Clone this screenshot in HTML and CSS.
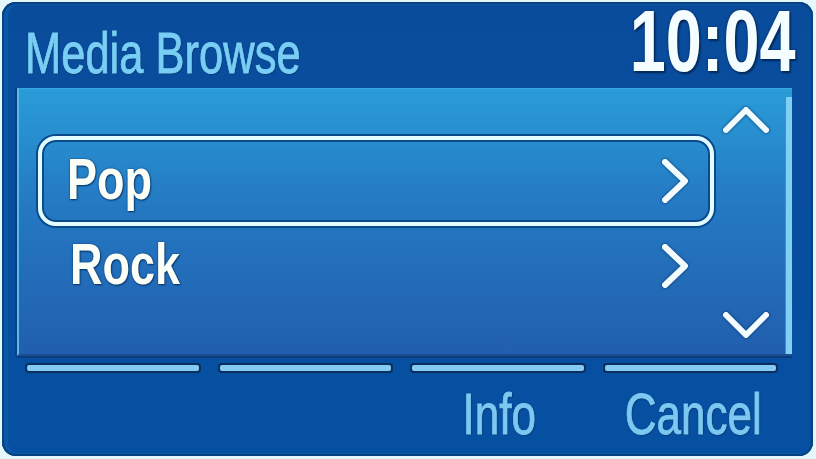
FILE: index.html
```html
<!DOCTYPE html>
<html>
<head>
<meta charset="utf-8">
<link rel="stylesheet" href="styles.css">
</head>
<body>
<div class="frame">
  <div class="header">
    <div class="title">Media Browse</div>
    <div class="clock">10:04</div>
  </div>
  <div class="panel">
    <div class="list">
      <div class="row selected">
        <span class="label">Pop</span>
        <svg class="chev" width="30" height="48" viewBox="0 0 30 48"><polyline points="5,5 25,24 5,43"/></svg>
      </div>
      <div class="row">
        <span class="label">Rock</span>
        <svg class="chev" width="30" height="48" viewBox="0 0 30 48"><polyline points="5,5 25,24 5,43"/></svg>
      </div>
    </div>
    <div class="scroll">
      <svg class="caret" width="50" height="32" viewBox="0 0 50 32"><polyline points="5,27 25,7 45,27"/></svg>
      <svg class="caret" width="50" height="32" viewBox="0 0 50 32"><polyline points="5,5 25,25 45,5"/></svg>
    </div>
    <div class="track"></div>
  </div>
  <div class="softkeys">
    <div class="bar"></div>
    <div class="bar"></div>
    <div class="bar"></div>
    <div class="bar"></div>
  </div>
  <div class="keylabels">
    <div class="key"></div>
    <div class="key"></div>
    <div class="key"><span class="keytext">Info</span></div>
    <div class="key"><span class="keytext">Cancel</span></div>
  </div>
</div>
</body>
</html>
```
FILE: styles.css
```css
html, body {
  margin: 0;
  padding: 0;
}
body {
  width: 816px;
  height: 459px;
  background: #e4f8fc;
  overflow: hidden;
  font-family: "Liberation Sans", Arial, sans-serif;
}
.frame {
  margin: 2px 3px 3px 2px;
  height: 454px;
  box-sizing: border-box;
  border-radius: 14px;
  background: linear-gradient(180deg, #0a4c9c 0%, #0650a2 100%);
  box-shadow: inset 0 0 0 2px #07417f, inset 3px 0 0 3px #0a58a8;
  display: flex;
  flex-direction: column;
  padding: 0 21px 0 15px;
}
.header {
  height: 86px;
  display: flex;
  justify-content: space-between;
  align-items: flex-end;
}
.title {
  color: #78cef4;
  font-size: 58px;
  line-height: 1;
  margin-left: 8px;
  margin-bottom: 6px;
  -webkit-text-stroke: 0.9px #78cef4;
  text-shadow: 0 0 2px #06366e, 1px 1px 1px #06366e;
  transform: scaleX(0.75);
  transform-origin: left center;
  white-space: nowrap;
}
.clock {
  color: #f4fdff;
  font-weight: bold;
  font-size: 87px;
  line-height: 80px;
  margin-right: -4px;
  margin-bottom: 7px;
  text-shadow: 0 0 3px #042a5a, 2px 2px 2px #042a5a;
  transform: scaleX(0.745);
  transform-origin: right center;
  white-space: nowrap;
}
.panel {
  height: 268px;
  box-sizing: border-box;
  background: linear-gradient(180deg, #2a9cd8 0%, #2478c2 45%, #215fae 100%);
  border-left: 2px solid #58bcea;
  border-top: 1px solid #3aa8e0;
  border-bottom: 2px solid #1a4f94;
  box-shadow: -2px 0 0 #0a3f82, 0 2px 0 #0b3c78;
  display: flex;
  position: relative;
}
.list {
  width: 676px;
  margin-left: 19px;
  padding-top: 47px;
  display: flex;
  flex-direction: column;
}
.row {
  height: 90px;
  box-sizing: border-box;
  display: flex;
  align-items: center;
  justify-content: space-between;
  padding: 0 20px 0 25px;
  border: 4px solid transparent;
  border-radius: 18px;
}
.row + .row {
  height: 88px;
  margin-top: -4px;
  padding-left: 28px;
}
.row.selected {
  border-color: #e2fcff;
  box-shadow: 0 0 0 2px #0b4a8a, inset 0 0 0 2px #0b4a8a;
}
.label {
  color: #fbfff8;
  font-weight: bold;
  font-size: 57px;
  line-height: 1;
  margin-top: -4px;
  text-shadow: 0 0 2px #063468, 1px 1px 2px #063468;
  transform: scaleX(0.79);
  transform-origin: left center;
}
.chev polyline, .caret polyline {
  fill: none;
  stroke: #f2fcff;
  stroke-width: 6;
  stroke-linecap: round;
  stroke-linejoin: round;
}
.chev, .caret {
  filter: drop-shadow(0 0 1.5px #06366e);
}
.scroll {
  width: 52px;
  margin-left: 7px;
  display: flex;
  flex-direction: column;
  justify-content: space-between;
  padding: 14px 0 12px;
}
.track {
  position: absolute;
  right: 0;
  top: 8px;
  bottom: 0;
  width: 6px;
  background: #7fd0f2;
  border-left: 1px solid #3d8fd0;
}
.softkeys {
  display: grid;
  grid-template-columns: repeat(4, 1fr);
  gap: 17px;
  padding: 7px 14px 0 8px;
}
.bar {
  height: 6px;
  border-radius: 4px;
  background: #86ccf2;
  border: 2px solid #0a2f5e;
}
.keylabels {
  display: grid;
  grid-template-columns: repeat(4, 1fr);
  gap: 17px;
  padding: 12px 8px 0 14px;
}
.key {
  text-align: center;
}
.keytext {
  display: inline-block;
  color: #7cc8f0;
  font-size: 58px;
  line-height: 1;
  -webkit-text-stroke: 0.9px #7cc8f0;
  text-shadow: 0 0 2px #06366e, 1px 1px 1px #06366e;
  transform: scaleX(0.76);
  transform-origin: center center;
  white-space: nowrap;
}
```
